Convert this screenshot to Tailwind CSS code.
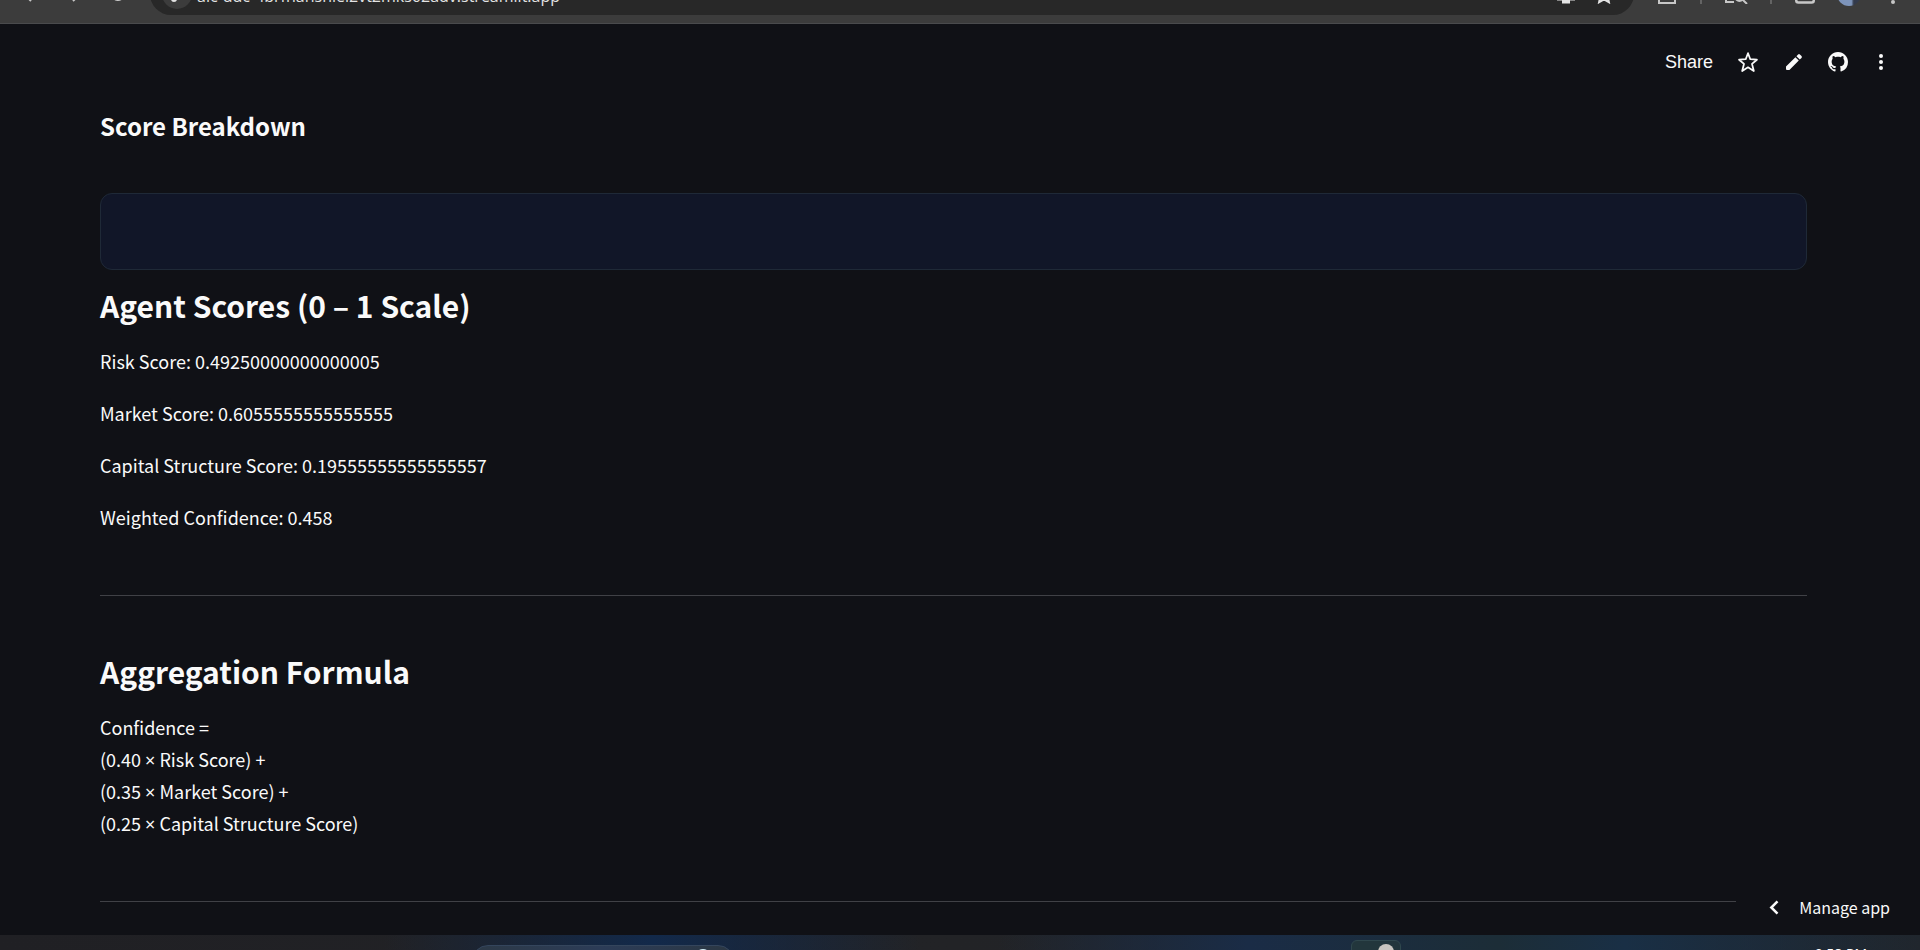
<!DOCTYPE html>
<html lang="en">
<head>
<meta charset="utf-8">
<meta name="viewport" content="width=device-width, initial-scale=1">
<title>Score Breakdown</title>
<script src="https://cdn.jsdelivr.net/npm/@tailwindcss/browser@4"></script>
</head>
<body class="flex h-screen flex-col overflow-hidden bg-[#101116] font-['Noto_Sans_CJK_SC',sans-serif] text-[#fafafa]">

<!-- Browser toolbar -->
<div class="flex h-6 shrink-0 items-end overflow-hidden border-b border-[#4a4b4d] bg-[#3c3c3c] text-[#c7c7c7]">
  <div class="flex w-[150px] shrink-0 justify-end gap-7 pr-6 pb-[21px]">
    <svg class="h-4 w-4" viewBox="0 0 16 16" fill="none" stroke="currentColor" stroke-width="2"><path d="M9 1 2 8l7 7M2 8h13"/></svg>
    <svg class="h-4 w-4" viewBox="0 0 16 16" fill="none" stroke="currentColor" stroke-width="2"><path d="m7 1 7 7-7 7M14 8H1"/></svg>
    <svg class="h-4 w-4" viewBox="0 0 16 16" fill="none" stroke="currentColor" stroke-width="2"><path d="M14 8a6 6 0 1 1-2-4.500M14 1v4h-4"/></svg>
  </div>
  <div class="mb-2 mr-[23px] flex h-[42px] min-w-0 flex-1 items-center rounded-full bg-[#282828] pl-3 text-[#e3e3e3]">
    <button aria-label="Site information" class="flex size-[30px] shrink-0 items-center justify-center rounded-full bg-[#3c3c3c]">
      <svg class="h-5 w-5" viewBox="0 0 20 20" fill="none" stroke="currentColor" stroke-width="2"><path d="M2 6h8M16 6h2M2 15h2M10 15h8"/><circle cx="13" cy="6" r="2"/><circle cx="7" cy="15" r="2"/></svg>
    </button>
    <input aria-label="Address" class="mt-1 ml-[5px] h-6 min-w-0 flex-1 bg-transparent font-['Open_Sans',sans-serif] text-base outline-none" value="aic-ddc-4brfnanshiei2vt2mks62adv.streamlit.app">
    <svg class="mr-[18px] h-5 w-5" viewBox="0 0 20 20" fill="none" stroke="currentColor" stroke-width="2"><path d="M2 2h16v12H2z"/><path d="M1 15h18M6 18h8" stroke-width="3"/></svg>
    <svg class="mr-5 h-5 w-5" viewBox="0 0 20 20" fill="none" stroke="currentColor" stroke-width="2"><path d="m10 3 2.300 5 5.500.6-4.100 3.700 1.200 5.900L10 15.300l-4.900 2.900 1.200-5.900-4.100-3.700 5.500-.6z"/></svg>
  </div>
  <div class="flex shrink-0 items-end pr-[25px] pb-[19px]">
    <svg class="mr-[23px] h-5 w-5" viewBox="0 0 20 20" fill="none" stroke="currentColor" stroke-width="2"><path d="M2 7v12h16V7M10 1v12"/></svg>
    <span class="mr-[22px] h-5 w-0.5 bg-[#646464]"></span>
    <svg class="mr-[22px] h-5 w-6" viewBox="0 0 24 20" fill="none" stroke="currentColor" stroke-width="2"><path d="M10 18H2V3h18v5M18.500 15.500 23 20"/><circle cx="15.500" cy="13" r="4"/></svg>
    <span class="mr-[23px] h-5 w-0.5 bg-[#646464]"></span>
    <svg class="mr-[22px] h-5 w-5" viewBox="0 0 20 20" fill="none" stroke="currentColor" stroke-width="2.500"><rect x="1.250" y="2" width="17.500" height="16.500" rx="2"/></svg>
    <span class="mr-[30px] -mb-0.5 size-6 rounded-full bg-linear-to-r from-[#7d94ba] from-60% to-[#333a4b] to-70%"></span>
    <svg class="h-5 w-1" viewBox="0 0 4 20" fill="currentColor"><circle cx="2" cy="2" r="2"/><circle cx="2" cy="10" r="2"/><circle cx="2" cy="18" r="2"/></svg>
  </div>
</div>

<!-- Application -->
<div class="relative min-h-0 flex-1 overflow-hidden">
  <header class="absolute inset-x-0 top-0 flex h-[75px] items-center justify-end pr-[29px]">
    <button class="mr-6 font-['Liberation_Sans',sans-serif] text-lg">Share</button>
    <button aria-label="Favorite" class="mr-6">
      <svg class="size-[22px]" viewBox="0 0 22 22" fill="none" stroke="currentColor" stroke-width="1.800" stroke-linejoin="round"><path d="m11 2.200 2.300 6 6.600.5-4.900 4.200 1.800 7.100L11 16.300l-5.800 3.700L7 12.900 2.100 8.700l6.600-.5z"/></svg>
    </button>
    <button aria-label="Edit" class="mr-[23px]">
      <svg class="size-[22px]" viewBox="0 0 22 22" fill="currentColor"><path d="m3 15.600 9.400-9.400 3.400 3.400L6.400 19H4a1 1 0 0 1-1-1zM13.400 5.200l1.700-1.700a1.300 1.300 0 0 1 1.800 0l1.600 1.600a1.300 1.300 0 0 1 0 1.800l-1.700 1.700z"/></svg>
    </button>
    <a href="#" aria-label="View source on GitHub" class="mr-[23px]">
      <svg class="size-5" viewBox="0 0 16 16" fill="currentColor"><path d="M8 0C3.580 0 0 3.580 0 8c0 3.540 2.290 6.530 5.470 7.590.4.070.55-.17.55-.38 0-.19-.01-.82-.01-1.490-2.010.37-2.530-.49-2.690-.94-.09-.23-.48-.94-.82-1.130-.28-.15-.68-.52-.01-.53.630-.01 1.080.58 1.230.82.720 1.210 1.870.87 2.330.66.070-.52.280-.87.510-1.070-1.780-.2-3.640-.89-3.640-3.950 0-.87.310-1.590.82-2.150-.08-.2-.36-1.020.08-2.120 0 0 .67-.21 2.200.82.640-.18 1.320-.27 2-.27s1.360.09 2 .27c1.530-1.040 2.200-.82 2.200-.82.440 1.100.16 1.920.08 2.120.51.560.82 1.270.82 2.150 0 3.070-1.870 3.750-3.650 3.950.29.250.54.730.54 1.480 0 1.070-.01 1.930-.01 2.200 0 .21.150.46.550.38A8.010 8.010 0 0 0 16 8c0-4.420-3.580-8-8-8z"/></svg>
    </a>
    <button aria-label="Main menu">
      <svg class="size-5" viewBox="0 0 20 20" fill="currentColor"><circle cx="10" cy="4" r="2"/><circle cx="10" cy="10" r="2"/><circle cx="10" cy="16" r="2"/></svg>
    </button>
  </header>

  <main class="pt-[85px] pr-[113px] pl-[100px]">
    <h3 class="text-2xl leading-[34px] font-bold">Score Breakdown</h3>
    <div class="mt-[50px] h-[77px] rounded-xl border border-[#1f2937] bg-[#111628]"></div>
    <h2 class="mt-3.5 text-3xl leading-[42px] font-bold">Agent Scores (0 – 1 Scale)</h2>
    <div class="mt-[19px] flex flex-col gap-5 text-lg leading-8">
      <p>Risk Score: 0.49250000000000005</p>
      <p>Market Score: 0.6055555555555555</p>
      <p>Capital Structure Score: 0.19555555555555557</p>
      <p>Weighted Confidence: 0.458</p>
    </div>
    <hr class="mt-[62px] border-[#404146]">
    <h2 class="mt-[54px] text-3xl leading-[42px] font-bold">Aggregation Formula</h2>
    <p class="mt-[19px] text-lg leading-8">Confidence =<br>(0.40 <span class="font-['Noto_Sans'] leading-none">×</span> Risk Score) +<br>(0.35 <span class="font-['Noto_Sans'] leading-none">×</span> Market Score) +<br>(0.25 <span class="font-['Noto_Sans'] leading-none">×</span> Capital Structure Score)</p>
    <hr class="mt-[62px] border-[#404146]">
  </main>

  <button class="absolute right-0 bottom-0 flex h-14 items-center gap-[17px] bg-[#101116] px-[30px] text-base">
    <svg class="size-4" viewBox="0 0 16 16" fill="none" stroke="currentColor" stroke-width="2.500"><path d="M11.500 2.300 5.300 8.500l6.200 6.200"/></svg>
    Manage app
  </button>
</div>

<!-- Desktop taskbar -->
<div class="relative flex h-[15px] shrink-0 overflow-hidden bg-linear-to-r from-[#202024] via-[#222326] to-[#20262d]">
  <div class="h-full w-[20%]"></div>
  <div class="h-full w-[28%] bg-linear-to-r from-transparent via-[#12294a] to-transparent"></div>
  <div class="h-full w-[4%]"></div>
  <div class="h-full w-[26%] bg-linear-to-r from-transparent via-[#1a2c46] to-[#1c2d37]"></div>
  <div class="h-full flex-1 bg-linear-to-r from-[#1c2d37] via-[#192f45] via-30% to-transparent"></div>
  <div class="absolute top-2.5 left-[472px] h-12 w-[262px] rounded-2xl border border-[#34455c] bg-linear-to-r from-[#2c3947] via-[#2c3c57] to-[#2b3743]"></div>
  <div class="absolute top-3.5 left-[695px] size-4 rounded-full bg-[#d5f0fa]"></div>
  <div class="absolute top-[5px] left-[1351px] flex h-12 w-[50px] justify-center rounded-md border border-[#2f474d] bg-[#22363c] pt-[3px] pl-5">
    <span class="h-6 w-4 rounded-full bg-[#c9c6c0]"></span>
  </div>
  <time class="absolute top-[11px] right-[53px] font-['Open_Sans',sans-serif] text-sm leading-4 text-white">9:58 PM</time>
</div>
</body>
</html>
